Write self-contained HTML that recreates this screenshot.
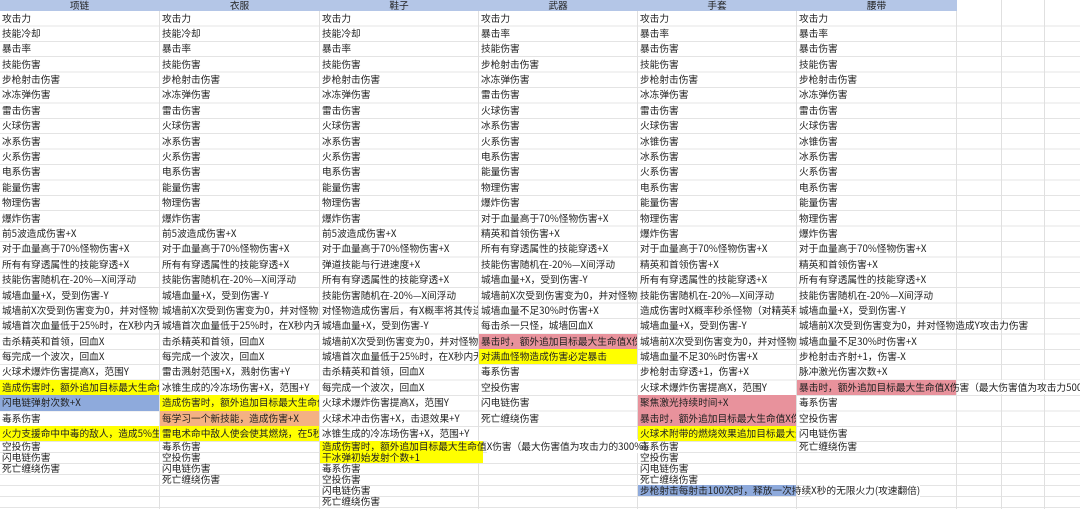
<!DOCTYPE html>
<html><head><meta charset="utf-8"><style>
*{margin:0;padding:0;box-sizing:border-box}
body{width:1080px;height:509px;overflow:hidden;background:#fff;position:relative;font-family:"WenQuanYi Zen Hei","Noto Sans CJK SC",sans-serif;font-size:9.7px;color:#222}
.grid{position:absolute;left:0;top:10.5px;width:1080px;height:431px;background:repeating-linear-gradient(to bottom,transparent 0,transparent 14.4px,#e4e4e4 14.4px,#e4e4e4 15.4px)}
.grid2{position:absolute;left:0;top:441.5px;width:1080px;height:68px;background:repeating-linear-gradient(to bottom,transparent 0,transparent 10px,#e4e4e4 10px,#e4e4e4 11px)}
.v{position:absolute;top:0;width:1px;height:509px;background:#e0e0e0}
.hdr{position:absolute;left:0;top:0;width:957px;height:10.5px;background:#b4c6e7}
.hdr div{position:absolute;top:0;height:10.5px;line-height:10.5px;text-align:center;font-size:9.7px}
.col{position:absolute;top:10.5px}
.col div{height:15.4px;line-height:15.4px;white-space:nowrap;overflow:hidden;padding-left:2px}
.col .s{height:11px;line-height:11px}
.col .o{overflow:visible}
.y{background:#ffff00}.p{background:#e8929c}.b{background:#8eaadc}.or{background:#f4b183}
</style></head><body>
<div class="grid"></div><div class="grid2"></div>
<div class="v" style="left:159px"></div><div class="v" style="left:319px"></div><div class="v" style="left:478px"></div><div class="v" style="left:637px"></div><div class="v" style="left:796px"></div><div class="v" style="left:956px"></div><div class="v" style="left:1001px"></div><div class="v" style="left:1044px"></div>
<div class="hdr"><div style="left:0;width:159px">项链</div><div style="left:160px;width:159px">衣服</div><div style="left:320px;width:158px">鞋子</div><div style="left:479px;width:158px">武器</div><div style="left:638px;width:158px">手套</div><div style="left:797px;width:159px">腰带</div></div>

<div class="col" style="left:0;width:159px">
<div>攻击力</div><div>技能冷却</div><div>暴击率</div><div>技能伤害</div><div>步枪射击伤害</div><div>冰冻弹伤害</div><div>雷击伤害</div><div>火球伤害</div><div>冰系伤害</div><div>火系伤害</div><div>电系伤害</div><div>能量伤害</div><div>物理伤害</div><div>爆炸伤害</div><div>前5波造成伤害+X</div><div>对于血量高于70%怪物伤害+X</div><div>所有有穿透属性的技能穿透+X</div><div>技能伤害随机在-20%—X间浮动</div><div>城墙血量+X，受到伤害-Y</div><div>城墙前X次受到伤害变为0，并对怪物造成</div><div>城墙首次血量低于25%时，在X秒内无敌</div><div>击杀精英和首领，回血X</div><div>每完成一个波次，回血X</div><div>火球术爆炸伤害提高X，范围Y</div><div class="y">造成伤害时，额外追加目标最大生命值</div><div class="b">闪电链弹射次数+X</div><div>毒系伤害</div><div class="y">火力支援命中中毒的敌人，造成5%生命值</div>
<div class="s">空投伤害</div><div class="s">闪电链伤害</div><div class="s">死亡缠绕伤害</div>
</div>

<div class="col" style="left:160px;width:159px">
<div>攻击力</div><div>技能冷却</div><div>暴击率</div><div>技能伤害</div><div>步枪射击伤害</div><div>冰冻弹伤害</div><div>雷击伤害</div><div>火球伤害</div><div>冰系伤害</div><div>火系伤害</div><div>电系伤害</div><div>能量伤害</div><div>物理伤害</div><div>爆炸伤害</div><div>前5波造成伤害+X</div><div>对于血量高于70%怪物伤害+X</div><div>所有有穿透属性的技能穿透+X</div><div>技能伤害随机在-20%—X间浮动</div><div>城墙血量+X，受到伤害-Y</div><div>城墙前X次受到伤害变为0，并对怪物造成</div><div>城墙首次血量低于25%时，在X秒内无敌</div><div>击杀精英和首领，回血X</div><div>每完成一个波次，回血X</div><div>雷击溅射范围+X，溅射伤害+Y</div><div>冰锥生成的冷冻场伤害+X，范围+Y</div><div class="y">造成伤害时，额外追加目标最大生命值</div><div class="or">每学习一个新技能，造成伤害+X</div><div class="y">雷电术命中敌人使会使其燃烧，在5秒内</div>
<div class="s">毒系伤害</div><div class="s">空投伤害</div><div class="s">闪电链伤害</div><div class="s">死亡缠绕伤害</div>
</div>

<div class="col" style="left:320px;width:158px">
<div>攻击力</div><div>技能冷却</div><div>暴击率</div><div>技能伤害</div><div>步枪射击伤害</div><div>冰冻弹伤害</div><div>雷击伤害</div><div>火球伤害</div><div>冰系伤害</div><div>火系伤害</div><div>电系伤害</div><div>能量伤害</div><div>物理伤害</div><div>爆炸伤害</div><div>前5波造成伤害+X</div><div>对于血量高于70%怪物伤害+X</div><div>弹道技能与行进速度+X</div><div>所有有穿透属性的技能穿透+X</div><div>技能伤害随机在-20%—X间浮动</div><div>对怪物造成伤害后，有X概率将其传送回</div><div>城墙血量+X，受到伤害-Y</div><div>城墙前X次受到伤害变为0，并对怪物造成</div><div>城墙首次血量低于25%时，在X秒内无敌</div><div>击杀精英和首领，回血X</div><div>每完成一个波次，回血X</div><div>火球术爆炸伤害提高X，范围Y</div><div>火球术冲击伤害+X，击退效果+Y</div><div>冰锥生成的冷冻场伤害+X，范围+Y</div>
<div class="s y o" style="width:163px">造成伤害时，额外追加目标最大生命值<span style="background:#fff">X伤害（最大伤害值为攻击力的300%）</span></div><div class="s y" style="width:163px">干冰弹初始发射个数+1</div><div class="s">毒系伤害</div><div class="s">空投伤害</div><div class="s">闪电链伤害</div><div class="s">死亡缠绕伤害</div>
</div>

<div class="col" style="left:479px;width:158px">
<div>攻击力</div><div>暴击率</div><div>技能伤害</div><div>步枪射击伤害</div><div>冰冻弹伤害</div><div>雷击伤害</div><div>火球伤害</div><div>冰系伤害</div><div>火系伤害</div><div>电系伤害</div><div>能量伤害</div><div>物理伤害</div><div>爆炸伤害</div><div>对于血量高于70%怪物伤害+X</div><div>精英和首领伤害+X</div><div>所有有穿透属性的技能穿透+X</div><div>技能伤害随机在-20%—X间浮动</div><div>城墙血量+X，受到伤害-Y</div><div>城墙前X次受到伤害变为0，并对怪物造成</div><div>城墙血量不足30%时伤害+X</div><div>每击杀一只怪，城墙回血X</div><div class="p">暴击时，额外追加目标最大生命值X伤害</div><div class="y">对满血怪物造成伤害必定暴击</div><div>毒系伤害</div><div>空投伤害</div><div>闪电链伤害</div><div>死亡缠绕伤害</div>
</div>

<div class="col" style="left:638px;width:158px">
<div>攻击力</div><div>暴击率</div><div>暴击伤害</div><div>技能伤害</div><div>步枪射击伤害</div><div>冰冻弹伤害</div><div>雷击伤害</div><div>火球伤害</div><div>冰锥伤害</div><div>冰系伤害</div><div>火系伤害</div><div>电系伤害</div><div>能量伤害</div><div>物理伤害</div><div>爆炸伤害</div><div>对于血量高于70%怪物伤害+X</div><div>精英和首领伤害+X</div><div>所有有穿透属性的技能穿透+X</div><div>技能伤害随机在-20%—X间浮动</div><div>造成伤害时X概率秒杀怪物（对精英和首领</div><div>城墙血量+X，受到伤害-Y</div><div>城墙前X次受到伤害变为0，并对怪物造成</div><div>城墙血量不足30%时伤害+X</div><div>步枪射击穿透+1，伤害+X</div><div>火球术爆炸伤害提高X，范围Y</div><div class="p">聚焦激光持续时间+X</div><div class="p">暴击时，额外追加目标最大生命值X伤害</div><div class="y">火球术附带的燃烧效果追加目标最大生命</div>
<div class="s">毒系伤害</div><div class="s">空投伤害</div><div class="s">闪电链伤害</div><div class="s">死亡缠绕伤害</div><div class="s o b" style="width:158px">步枪射击每射击100次时，释放一次持续<span style="background:#fff">X秒的无限火力(攻速翻倍)</span></div>
</div>

<div class="col" style="left:797px;width:159px">
<div>攻击力</div><div>暴击率</div><div>暴击伤害</div><div>技能伤害</div><div>步枪射击伤害</div><div>冰冻弹伤害</div><div>雷击伤害</div><div>火球伤害</div><div>冰锥伤害</div><div>冰系伤害</div><div>火系伤害</div><div>电系伤害</div><div>能量伤害</div><div>物理伤害</div><div>爆炸伤害</div><div>对于血量高于70%怪物伤害+X</div><div>精英和首领伤害+X</div><div>所有有穿透属性的技能穿透+X</div><div>技能伤害随机在-20%—X间浮动</div><div>城墙血量+X，受到伤害-Y</div><div class="o">城墙前X次受到伤害变为0，并对怪物造成Y攻击力伤害</div><div>城墙血量不足30%时伤害+X</div><div>步枪射击齐射+1，伤害-X</div><div>脉冲激光伤害次数+X</div><div class="o p" style="width:159px">暴击时，额外追加目标最大生命值X伤害<span style="background:#fff">（最大伤害值为攻击力500%）</span></div><div>毒系伤害</div><div>空投伤害</div><div>闪电链伤害</div>
<div class="s">死亡缠绕伤害</div>
</div>
</body></html>
